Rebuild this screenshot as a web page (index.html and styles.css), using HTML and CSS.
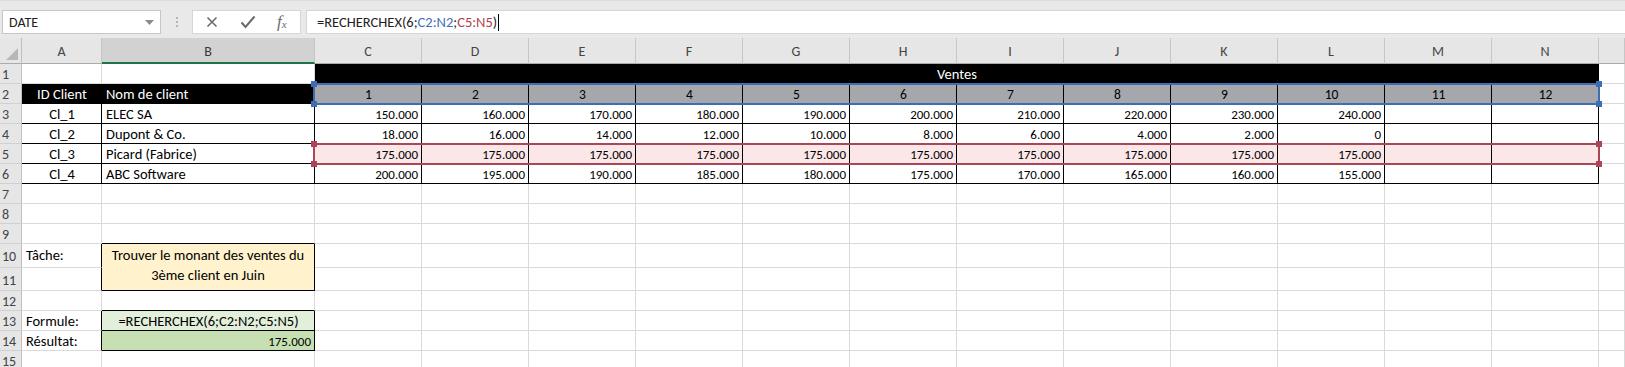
FILE: index.html
```html
<!DOCTYPE html>
<html lang="fr">
<head>
<meta charset="utf-8">
<title>RECHERCHEX</title>
<link rel="stylesheet" href="styles.css">
</head>
<body>
<div class="fbar">
  <div class="namebox"><span>DATE</span>
    <svg class="dd" width="9" height="5" viewBox="0 0 9 5"><path d="M0 0h9L4.5 5z" fill="#8a8a8a"/></svg>
  </div>
  <div class="grip"><i></i><i></i><i></i></div>
  <div class="fbtns">
    <svg class="ico" width="14" height="14" viewBox="0 0 14 14"><path d="M2.5 2.5l9 9M11.5 2.5l-9 9" stroke="#6b6b6b" stroke-width="1.6" fill="none"/></svg>
    <svg class="ico" width="16" height="14" viewBox="0 0 16 14"><path d="M1.5 7.5l4 4.5L14.5 1.5" stroke="#6b6b6b" stroke-width="2" fill="none"/></svg>
    <span class="fx">f<sub>x</sub></span>
  </div>
  <div class="finput">=RECHERCHEX(6;<span class="refb">C2:N2</span>;<span class="refr">C5:N5</span>)<span class="caret"></span></div>
</div>

<div class="sheet">
  <!-- header -->
  <div class="corner"><svg width="12" height="12" viewBox="0 0 12 12"><path d="M12 0v12H0z" fill="#b7b7b7"/></svg></div>
  <div class="ch">A</div><div class="ch sel">B</div><div class="ch">C</div><div class="ch">D</div><div class="ch">E</div><div class="ch">F</div><div class="ch">G</div><div class="ch">H</div><div class="ch">I</div><div class="ch">J</div><div class="ch">K</div><div class="ch">L</div><div class="ch">M</div><div class="ch">N</div><div class="ch">&nbsp;</div>

  <!-- row 1 -->
  <div class="rh">1</div><div class="c"></div><div class="c"></div>
  <div class="c blk ctr span12">Ventes</div><div class="c"></div>

  <!-- row 2 -->
  <div class="rh">2</div><div class="c blk ctr">ID Client</div><div class="c blk">Nom de client</div>
  <div class="c gr ctr num">1</div><div class="c gr ctr num">2</div><div class="c gr ctr num">3</div><div class="c gr ctr num">4</div><div class="c gr ctr num">5</div><div class="c gr ctr num">6</div><div class="c gr ctr num">7</div><div class="c gr ctr num">8</div><div class="c gr ctr num">9</div><div class="c gr ctr num">10</div><div class="c gr ctr num">11</div><div class="c gr ctr num">12</div><div class="c"></div>

  <!-- row 3 -->
  <div class="rh">3</div><div class="c bx ctr">Cl_1</div><div class="c bx">ELEC SA</div>
  <div class="c bx rt">150.000</div><div class="c bx rt">160.000</div><div class="c bx rt">170.000</div><div class="c bx rt">180.000</div><div class="c bx rt">190.000</div><div class="c bx rt">200.000</div><div class="c bx rt">210.000</div><div class="c bx rt">220.000</div><div class="c bx rt">230.000</div><div class="c bx rt">240.000</div><div class="c bx"></div><div class="c bx"></div><div class="c"></div>

  <!-- row 4 -->
  <div class="rh">4</div><div class="c bx ctr">Cl_2</div><div class="c bx">Dupont &amp; Co.</div>
  <div class="c bx rt">18.000</div><div class="c bx rt">16.000</div><div class="c bx rt">14.000</div><div class="c bx rt">12.000</div><div class="c bx rt">10.000</div><div class="c bx rt">8.000</div><div class="c bx rt">6.000</div><div class="c bx rt">4.000</div><div class="c bx rt">2.000</div><div class="c bx rt">0</div><div class="c bx"></div><div class="c bx"></div><div class="c"></div>

  <!-- row 5 -->
  <div class="rh">5</div><div class="c bx ctr">Cl_3</div><div class="c bx">Picard (Fabrice)</div>
  <div class="c bx pk rt">175.000</div><div class="c bx pk rt">175.000</div><div class="c bx pk rt">175.000</div><div class="c bx pk rt">175.000</div><div class="c bx pk rt">175.000</div><div class="c bx pk rt">175.000</div><div class="c bx pk rt">175.000</div><div class="c bx pk rt">175.000</div><div class="c bx pk rt">175.000</div><div class="c bx pk rt">175.000</div><div class="c bx pk"></div><div class="c bx pk"></div><div class="c"></div>

  <!-- row 6 -->
  <div class="rh">6</div><div class="c bx ctr">Cl_4</div><div class="c bx">ABC Software</div>
  <div class="c bx rt">200.000</div><div class="c bx rt">195.000</div><div class="c bx rt">190.000</div><div class="c bx rt">185.000</div><div class="c bx rt">180.000</div><div class="c bx rt">175.000</div><div class="c bx rt">170.000</div><div class="c bx rt">165.000</div><div class="c bx rt">160.000</div><div class="c bx rt">155.000</div><div class="c bx"></div><div class="c bx"></div><div class="c"></div>

  <!-- row 7 -->
  <div class="rh">7</div><div class="c"></div><div class="c"></div><div class="c"></div><div class="c"></div><div class="c"></div><div class="c"></div><div class="c"></div><div class="c"></div><div class="c"></div><div class="c"></div><div class="c"></div><div class="c"></div><div class="c"></div><div class="c"></div><div class="c"></div>
  <!-- row 8 -->
  <div class="rh">8</div><div class="c"></div><div class="c"></div><div class="c"></div><div class="c"></div><div class="c"></div><div class="c"></div><div class="c"></div><div class="c"></div><div class="c"></div><div class="c"></div><div class="c"></div><div class="c"></div><div class="c"></div><div class="c"></div><div class="c"></div>
  <!-- row 9 -->
  <div class="rh">9</div><div class="c"></div><div class="c bb"></div><div class="c"></div><div class="c"></div><div class="c"></div><div class="c"></div><div class="c"></div><div class="c"></div><div class="c"></div><div class="c"></div><div class="c"></div><div class="c"></div><div class="c"></div><div class="c"></div><div class="c"></div>
  <!-- row 10 -->
  <div class="rh">10</div><div class="c br top">Tâche:</div><div class="c bx or ctr wrap span2r">Trouver le monant des ventes du<br>3ème client en Juin</div><div class="c"></div><div class="c"></div><div class="c"></div><div class="c"></div><div class="c"></div><div class="c"></div><div class="c"></div><div class="c"></div><div class="c"></div><div class="c"></div><div class="c"></div><div class="c"></div><div class="c"></div>
  <!-- row 11 -->
  <div class="rh low">11</div><div class="c br"></div><div class="c"></div><div class="c"></div><div class="c"></div><div class="c"></div><div class="c"></div><div class="c"></div><div class="c"></div><div class="c"></div><div class="c"></div><div class="c"></div><div class="c"></div><div class="c"></div><div class="c"></div>
  <!-- row 12 -->
  <div class="rh">12</div><div class="c"></div><div class="c bb"></div><div class="c"></div><div class="c"></div><div class="c"></div><div class="c"></div><div class="c"></div><div class="c"></div><div class="c"></div><div class="c"></div><div class="c"></div><div class="c"></div><div class="c"></div><div class="c"></div><div class="c"></div>
  <!-- row 13 -->
  <div class="rh">13</div><div class="c br">Formule:</div><div class="c bx lg ctr">=RECHERCHEX(6;C2:N2;C5:N5)</div><div class="c"></div><div class="c"></div><div class="c"></div><div class="c"></div><div class="c"></div><div class="c"></div><div class="c"></div><div class="c"></div><div class="c"></div><div class="c"></div><div class="c"></div><div class="c"></div><div class="c"></div>
  <!-- row 14 -->
  <div class="rh">14</div><div class="c br">Résultat:</div><div class="c bx dg rt">175.000</div><div class="c"></div><div class="c"></div><div class="c"></div><div class="c"></div><div class="c"></div><div class="c"></div><div class="c"></div><div class="c"></div><div class="c"></div><div class="c"></div><div class="c"></div><div class="c"></div><div class="c"></div>
  <!-- row 15 -->
  <div class="rh">15</div><div class="c"></div><div class="c"></div><div class="c"></div><div class="c"></div><div class="c"></div><div class="c"></div><div class="c"></div><div class="c"></div><div class="c"></div><div class="c"></div><div class="c"></div><div class="c"></div><div class="c"></div><div class="c"></div><div class="c"></div>

  <!-- range highlights -->
  <div class="range range-blue"><i class="h tl"></i><i class="h tr"></i><i class="h bl"></i><i class="h brh"></i></div>
  <div class="range range-red"><i class="h tl"></i><i class="h tr"></i><i class="h bl"></i><i class="h brh"></i></div>
</div>
</body>
</html>
```

FILE: styles.css
```css
* { box-sizing: border-box; margin: 0; padding: 0; }

body {
  margin: 0;
  width: 1625px;
  height: 367px;
  overflow: hidden;
  background: #fff;
  font-family: Carlito, Lato, "Liberation Sans", sans-serif;
  font-size: 14.5px;
  color: #000;
}

/* ---------- formula bar ---------- */
.fbar {
  height: 38px;
  background: #e9e9e9;
  border-top: 1px solid #dcdcdc;
  display: flex;
  align-items: flex-start;
  padding: 9px 0 0 2px;
}

.namebox {
  width: 159px;
  height: 24px;
  background: #fff;
  border: 1px solid #c6c6c6;
  display: flex;
  align-items: center;
  justify-content: space-between;
  padding: 0 6px 0 6px;
  font-size: 14px;
  color: #222;
}

.grip {
  width: 31px;
  height: 24px;
  display: flex;
  flex-direction: column;
  align-items: center;
  justify-content: center;
  gap: 2px;
}
.grip i {
  display: block;
  width: 2px;
  height: 2px;
  background: #b5b5b5;
}

.fbtns {
  width: 109px;
  height: 24px;
  background: #fff;
  border: 1px solid #d6d6d6;
  display: flex;
  align-items: center;
  padding-left: 12px;
  gap: 21px;
}
.fx {
  font-family: "Liberation Serif", serif;
  font-style: italic;
  font-size: 17px;
  color: #6b6b6b;
  line-height: 1;
  margin-top: -2px;
}
.fx sub { font-size: 11px; vertical-align: -1px; }

.finput {
  flex: 1;
  margin-left: 5px;
  height: 24px;
  background: #fff;
  border: 1px solid #d6d6d6;
  border-right: none;
  display: flex;
  align-items: center;
  padding-left: 10px;
  font-size: 14.5px;
  color: #222;
  white-space: nowrap;
}
.refb { color: #3c6fb7; }
.refr { color: #b2404f; }
.caret {
  display: inline-block;
  width: 1px;
  height: 17px;
  background: #000;
  margin-left: 1px;
}

/* ---------- sheet ---------- */
.sheet {
  position: relative;
  display: grid;
  grid-template-columns: 22px 80px 213px repeat(12, 107px) 26px;
  grid-template-rows: 26px repeat(9, 20px) 24px 23px repeat(4, 20px);
}

.corner {
  background: #e6e6e6;
  border-right: 1px solid #c0c0c0;
  border-bottom: 1px solid #ababab;
  display: flex;
  align-items: flex-end;
  justify-content: flex-end;
  padding: 0 3px 3px 0;
}

.ch {
  background: #e6e6e6;
  border-right: 1px solid #c6c6c6;
  border-bottom: 1px solid #ababab;
  display: flex;
  align-items: center;
  justify-content: center;
  padding-top: 2px;
  color: #444;
  font-size: 14px;
}
.ch.sel {
  background: #d2d2d2;
  border-bottom: 2px solid #217346;
  color: #3a3a3a;
}

.rh {
  background: #e6e6e6;
  border-right: 1px solid #c0c0c0;
  border-bottom: 1px solid #d0d0d0;
  display: flex;
  align-items: center;
  padding-left: 2px;
  padding-top: 1px;
  color: #444;
  font-size: 14px;
}
.rh.low { align-items: flex-end; padding-bottom: 1px; }

.c {
  border-right: 1px solid #dadada;
  border-bottom: 1px solid #dadada;
  display: flex;
  align-items: center;
  padding: 1px 3px 0 4px;
  white-space: nowrap;
  overflow: hidden;
}
.c.top { align-items: flex-start; padding-top: 2px; }

.ctr { justify-content: center; text-align: center; }
.rt { justify-content: flex-end; font-size: 13px; padding-right: 3px; }
.num { font-size: 13.5px; }

.span12 { grid-column: span 12; }
.span2r { grid-row: span 2; }
.wrap { white-space: normal; line-height: 20px; padding: 0 3px 5px; }

.blk { background: #000; color: #fff; border-color: #000; }
.gr { background: #a6a7ac; border-right-color: #000; border-bottom-color: #000; }
.bx { border-right-color: #000; border-bottom-color: #000; }
.bb { border-bottom-color: #000; }
.br { border-right-color: #000; }
.pk { background: #fbe6e8; }
.or { background: #fff2cc; }
.lg { background: #e2efda; }
.dg { background: #c6e0b4; }

/* ---------- range highlights ---------- */
.range {
  position: absolute;
  left: 313px;
  width: 1287px;
  height: 22px;
  border: 2px solid;
  z-index: 2;
  pointer-events: none;
}
.range-blue { top: 45px; border-color: #3d6db3; }
.range-red { top: 105px; border-color: #ad4556; }

.h {
  position: absolute;
  width: 6px;
  height: 6px;
}
.range-blue .h { background: #3d6db3; }
.range-red .h { background: #ad4556; }
.h.tl { left: -4px; top: -4px; }
.h.tr { right: -4px; top: -4px; }
.h.bl { left: -4px; bottom: -4px; }
.h.brh { right: -4px; bottom: -4px; }
```
